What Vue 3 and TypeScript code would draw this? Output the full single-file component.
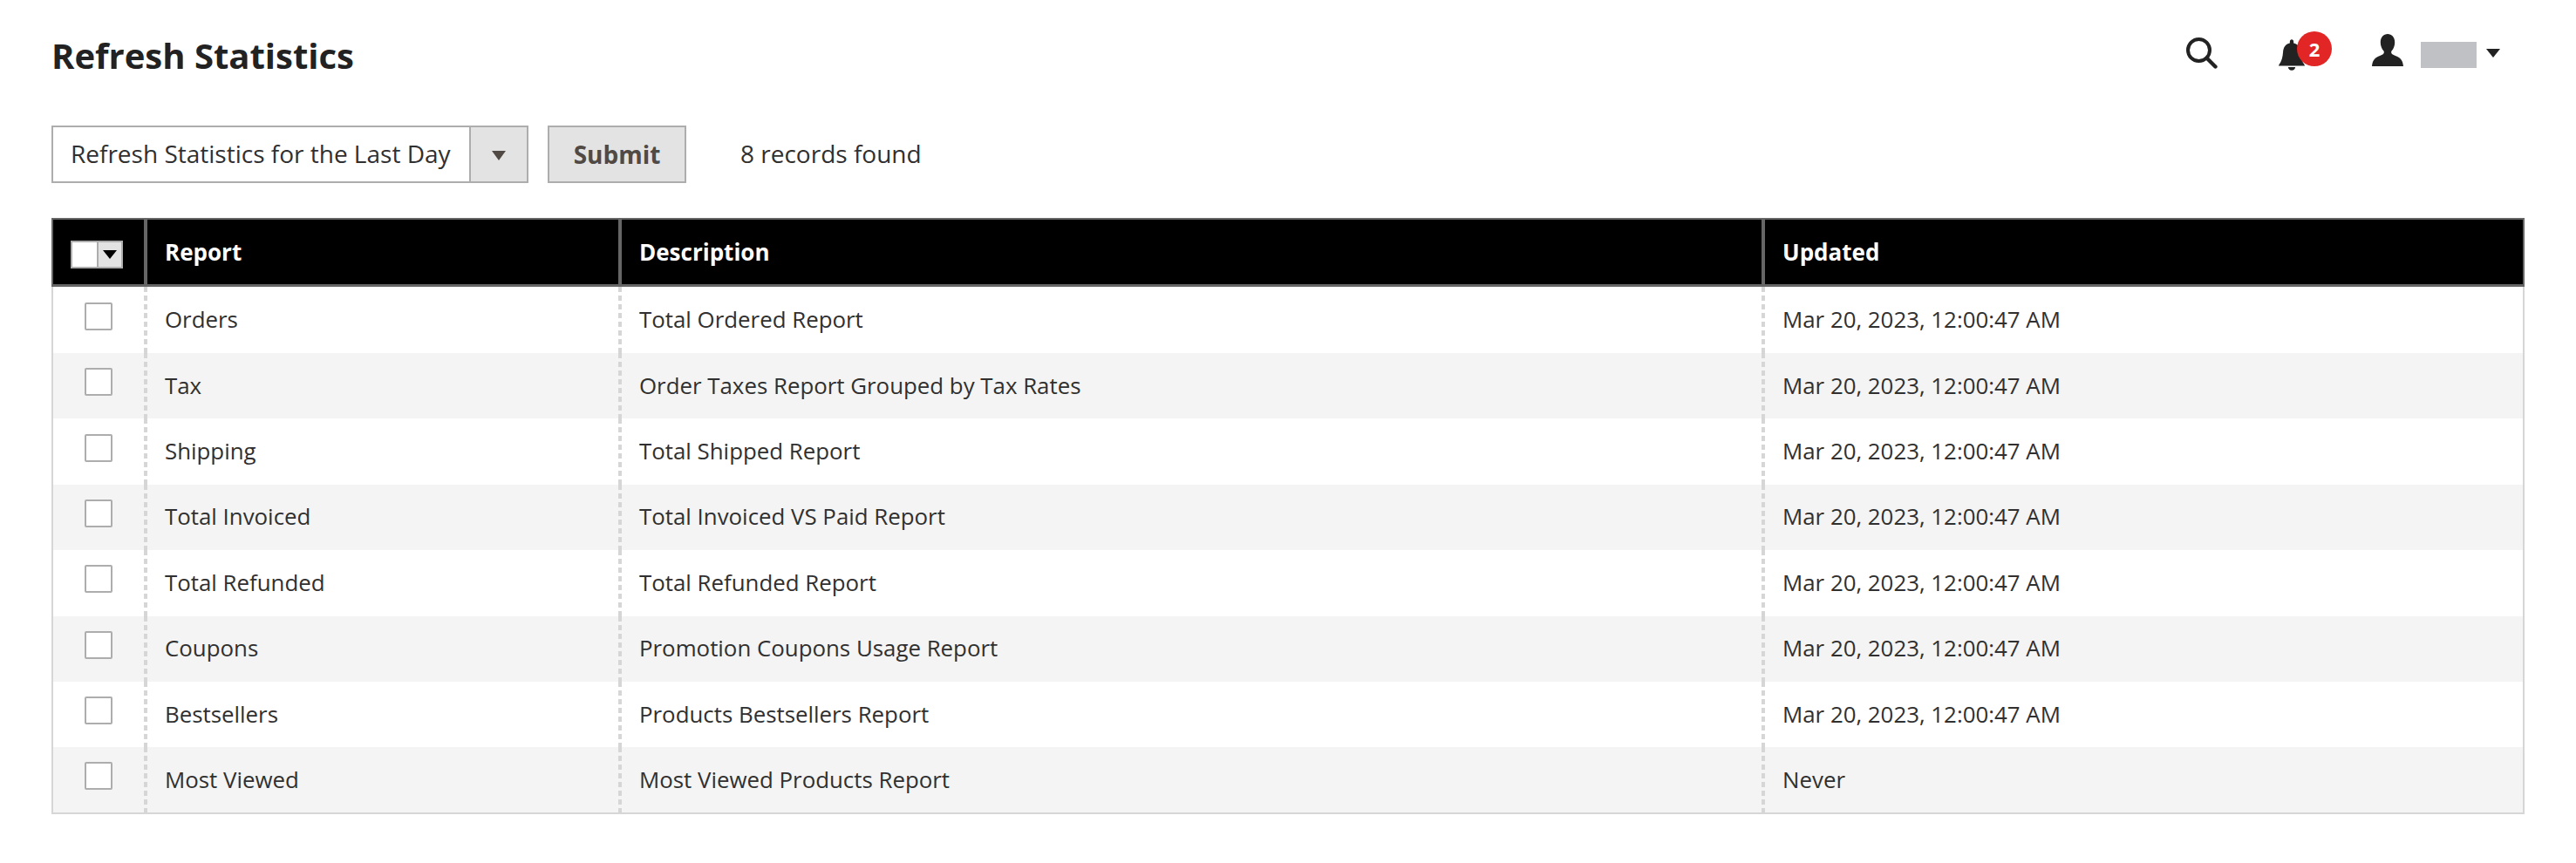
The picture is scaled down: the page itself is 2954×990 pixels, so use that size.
<template>
  <div class="page">
    <header class="page-header">
      <h1 class="page-title">Refresh Statistics</h1>
      <div class="header-actions">
        <svg class="icon-search" viewBox="0 0 36 36" width="36" height="36">
          <circle cx="14.500" cy="14.500" r="12.500" fill="none" stroke="#222" stroke-width="4" />
          <path d="M23.500 23.500 L33.500 33.500" stroke="#222" stroke-width="4.400" stroke-linecap="round" />
        </svg>
        <div class="bell-wrap">
          <svg class="icon-bell" viewBox="0 0 32 38" width="30" height="36">
            <path
              fill="#222"
              d="M16 0c1.300 0 2.300 1 2.300 2.600v2c5.400 1.300 7.800 5 8.300 10.800.5 5.800 1.500 11 4.900 15.500.3.400.5 1.100.5 1.500H0c0-.4.2-1.100.5-1.500 3.400-4.500 4.400-9.700 4.900-15.500.5-5.800 2.900-9.500 8.300-10.800v-2C13.700 1 14.700 0 16 0zM11.500 34h9c-.4 2.400-2.200 4-4.500 4s-4.100-1.600-4.500-4z"
            />
          </svg>
          <span class="badge">2</span>
        </div>
        <div class="user">
          <svg class="icon-user" viewBox="0 0 36 36" width="36" height="37" preserveAspectRatio="none">
            <path
              fill="#222"
              d="M18 0c4.600 0 8.200 3.700 8.200 9.200 0 4-1.500 7.300-3.500 9.600-.8 1-.8 2.600.3 3.500 1.600 1.200 3.900 1.900 6.300 3 3.400 1.500 6.100 4.400 6.700 10.700H0c.6-6.300 3.300-9.200 6.700-10.700 2.400-1.100 4.700-1.800 6.300-3 1.100-.9 1.100-2.500.3-3.500-2-2.300-3.500-5.600-3.500-9.600C9.800 3.700 13.400 0 18 0z"
            />
          </svg>
          <span class="user-name"></span>
          <span class="user-caret"></span>
        </div>
      </div>
    </header>

    <div class="toolbar">
      <div class="select">
        <span class="select-value">Refresh Statistics for the Last Day</span>
        <span class="select-arrow"><i class="caret"></i></span>
      </div>
      <button class="submit" type="button">Submit</button>
      <span class="records">8 records found</span>
    </div>

    <table class="grid">
      <colgroup>
        <col class="col-check" />
        <col class="col-report" />
        <col class="col-desc" />
        <col />
      </colgroup>
      <thead>
        <tr>
          <th class="check-cell">
            <div class="mass-select">
              <span class="mass-box"></span>
              <span class="mass-arrow"><i class="caret dark"></i></span>
            </div>
          </th>
          <th>Report</th>
          <th>Description</th>
          <th>Updated</th>
        </tr>
      </thead>
      <tbody>
        <tr v-for="row in rows" :key="row.report">
          <td class="check-cell"><span class="checkbox"></span></td>
          <td>{{ row.report }}</td>
          <td>{{ row.description }}</td>
          <td>{{ row.updated }}</td>
        </tr>
      </tbody>
    </table>
  </div>
</template>

<script setup lang="ts">
interface ReportRow {
  report: string
  description: string
  updated: string
}

const stamp = 'Mar 20, 2023, 12:00:47 AM'

const rows: ReportRow[] = [
  { report: 'Orders', description: 'Total Ordered Report', updated: stamp },
  { report: 'Tax', description: 'Order Taxes Report Grouped by Tax Rates', updated: stamp },
  { report: 'Shipping', description: 'Total Shipped Report', updated: stamp },
  { report: 'Total Invoiced', description: 'Total Invoiced VS Paid Report', updated: stamp },
  { report: 'Total Refunded', description: 'Total Refunded Report', updated: stamp },
  { report: 'Coupons', description: 'Promotion Coupons Usage Report', updated: stamp },
  { report: 'Bestsellers', description: 'Products Bestsellers Report', updated: stamp },
  { report: 'Most Viewed', description: 'Most Viewed Products Report', updated: 'Never' },
]
</script>

<style>
html,
body {
  background: #fff;
}
</style>

<style scoped>
.page {
  width: 2954px;
  height: 990px;
  box-sizing: border-box;
  padding: 0 58px 0 59px;
  font-family: 'Open Sans', sans-serif;
  color: #303030;
  overflow: hidden;
}

.page-header {
  height: 144px;
  display: flex;
  align-items: flex-start;
  justify-content: space-between;
}

.page-title {
  margin: 36px 0 0;
  font-size: 40px;
  line-height: 56px;
  font-weight: 700;
  color: #222;
}

.header-actions {
  display: flex;
  align-items: flex-start;
  padding-right: 29px;
}

.icon-search {
  margin-top: 43px;
}

.bell-wrap {
  position: relative;
  width: 30px;
  height: 36px;
  margin: 45px 0 0 70px;
}

.badge {
  position: absolute;
  left: 21px;
  top: -9px;
  width: 40px;
  height: 40px;
  border-radius: 50%;
  background: #e22626;
  color: #fff;
  font-size: 22px;
  line-height: 40px;
  font-weight: 700;
  text-align: center;
}

.user {
  display: flex;
  align-items: flex-start;
  margin-left: 77px;
}

.icon-user {
  margin-top: 39px;
}

.user-name {
  width: 64px;
  height: 30px;
  margin: 48px 0 0 20px;
  background: #c0c1c5;
}

.user-caret {
  width: 0;
  height: 0;
  margin: 56px 0 0 11px;
  border-left: 8px solid transparent;
  border-right: 8px solid transparent;
  border-top: 10px solid #222;
}

.toolbar {
  height: 106px;
  display: flex;
  align-items: flex-start;
  font-size: 28px;
}

.select {
  width: 547px;
  height: 66px;
  box-sizing: border-box;
  display: flex;
  border: 2px solid #adadad;
  background: #fff;
}

.select-value {
  flex: 1;
  padding-left: 20px;
  line-height: 60px;
  white-space: nowrap;
}

.select-arrow {
  width: 64px;
  display: flex;
  align-items: center;
  justify-content: center;
  border-left: 2px solid #adadad;
  background: #e3e3e3;
}

.caret {
  width: 0;
  height: 0;
  margin-top: 2px;
  border-left: 8px solid transparent;
  border-right: 8px solid transparent;
  border-top: 11px solid #514943;
}

.caret.dark {
  margin-top: 0;
  border-top-width: 10px;
  border-top-color: #000;
}

.submit {
  width: 159px;
  height: 66px;
  margin-left: 22px;
  padding: 0;
  border: 2px solid #adadad;
  background: #e3e3e3;
  color: #514943;
  font-family: inherit;
  font-size: 28px;
  font-weight: 700;
}

.records {
  margin-left: 62px;
  line-height: 64px;
  color: #303030;
}

.grid {
  width: 2836px;
  table-layout: fixed;
  border-collapse: separate;
  border-spacing: 0;
  font-size: 25.850px;
}

.col-check {
  width: 106px;
}

.col-report {
  width: 544px;
}

.col-desc {
  width: 1311px;
}

th {
  height: 79px;
  padding: 0 20px;
  box-sizing: border-box;
  background: #000;
  border-top: 2px solid #666;
  border-bottom: 3px solid #666;
  border-left: 4px solid #666;
  color: #fff;
  font-weight: 700;
  font-size: 26px;
  text-align: left;
}

th:first-child {
  border-left-width: 2px;
}

th:last-child {
  border-right: 2px solid #666;
}

/* dashed column separators: 6px on, 4px off */
td {
  height: 75.400px;
  padding: 0 21px 2px 24px;
  box-sizing: border-box;
  background-color: #fff;
  background-image: linear-gradient(#d6d6d6 6px, transparent 6px);
  background-size: 4px 10px;
  background-repeat: repeat-y;
  color: #303030;
}

td:first-child {
  background-image: none;
  border-left: 2px solid #d6d6d6;
}

td:last-child {
  border-right: 2px solid #d6d6d6;
}

tbody tr:first-child td {
  height: 76px;
}

tbody tr:nth-child(even) td {
  background-color: #f4f4f4;
}

tbody tr:last-child td {
  height: 77px;
  border-bottom: 2px solid #d6d6d6;
}

.check-cell {
  padding: 0;
}

.mass-select {
  display: flex;
  width: 60px;
  height: 32px;
  box-sizing: border-box;
  margin: 6px 0 0 20px;
  border: 2px solid #adadad;
}

.mass-box {
  width: 30px;
  box-sizing: border-box;
  background: #fff;
  border-right: 2px solid #adadad;
}

.mass-arrow {
  flex: 1;
  display: flex;
  align-items: center;
  justify-content: center;
  background: #e3e3e3;
}

.checkbox {
  display: block;
  width: 32px;
  height: 32px;
  box-sizing: border-box;
  margin: -9px 0 0 36px;
  border: 2px solid #adadad;
  border-radius: 2px;
  background: #fff;
}
</style>
